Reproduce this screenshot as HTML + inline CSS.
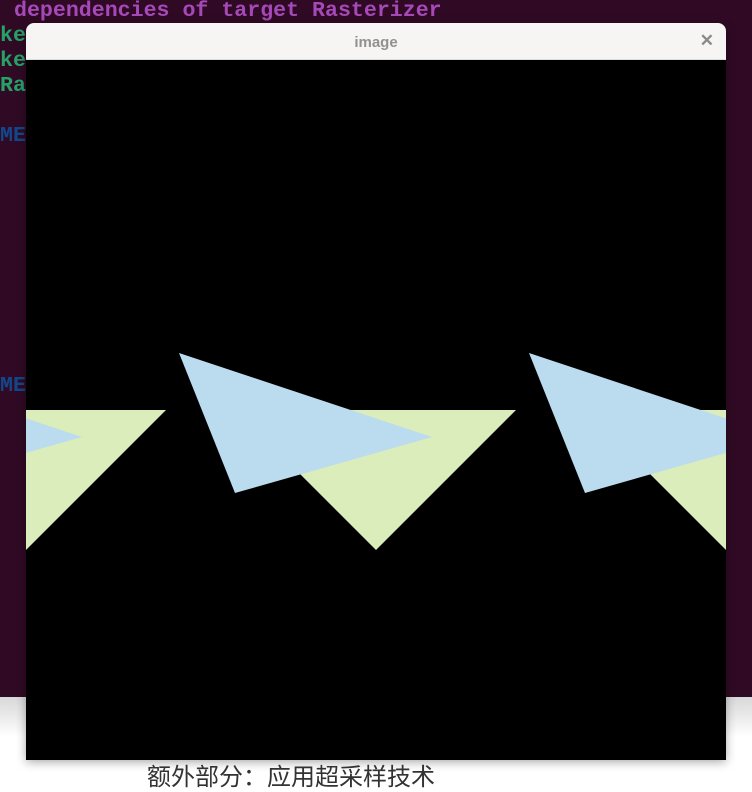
<!DOCTYPE html>
<html><head><meta charset="utf-8"><style>
body{margin:0;width:752px;height:789px;position:relative;overflow:hidden;background:#fff;font-family:"Liberation Sans","Noto Sans CJK SC",sans-serif}
.term{position:absolute;left:0;top:0;width:752px;height:697px;background:#300a24}
.t{position:absolute;font-family:"Liberation Mono",monospace;font-size:21.6px;font-weight:600;white-space:pre;line-height:25px}
.shade{position:absolute;left:0;top:697px;width:752px;height:40px;background:linear-gradient(#d8d8d8,#fff)}
.win{position:absolute;left:26px;top:23px;width:700px;height:737px;background:#000;border-radius:8px 8px 0 0;overflow:hidden;box-shadow:0 2px 10px rgba(0,0,0,.35)}
.bar{height:36px;background:#f6f5f4;border-bottom:1px solid #ddd;text-align:center;font-size:15px;font-weight:bold;color:#919191;line-height:39px;position:relative}
.x{position:absolute;right:12px;top:0;font-size:17px;color:#8a8a8a;line-height:36px}
.cap{position:absolute;left:147px;top:757px;font-size:24px;color:#333}
</style></head><body>
<div class="term">
<div class="t" style="left:14px;top:-1px;color:#a549b8">dependencies of target Rasterizer</div>
<div class="t" style="left:0;top:24px;color:#26a269">ke</div>
<div class="t" style="left:0;top:49px;color:#26a269">ke</div>
<div class="t" style="left:0;top:74px;color:#26a269">Ra</div>
<div class="t" style="left:-8px;top:95px;color:#ccc">.</div>
<div class="t" style="left:0;top:124px;color:#12488b">ME</div>
<div class="t" style="left:0;top:374px;color:#12488b">ME</div>
</div>
<div class="shade"></div>
<div class="win">
<div class="bar">image<span class="x">✕</span></div>
<svg width="700" height="701" style="position:absolute;left:0;top:37px" viewBox="26 60 700 701">
<g fill="#dbedbb">
<polygon points="-114,410 166,410 26,550"/>
<polygon points="236,410 516,410 376,550"/>
<polygon points="586,410 866,410 726,550"/>
</g>
<g fill="#bbdbef">
<polygon points="-171,353 82,437 -115,493"/>
<polygon points="179,353 432,437 235,493"/>
<polygon points="529,353 782,437 585,493"/>
</g>
</svg>
</div>
<div class="cap">额外部分：应用超采样技术</div>
</body></html>
